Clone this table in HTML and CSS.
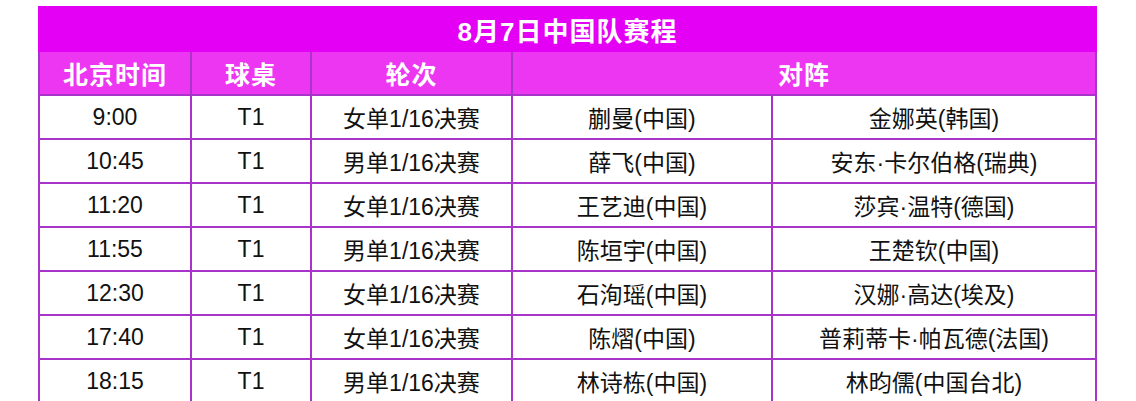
FILE: index.html
```html
<!DOCTYPE html>
<html lang="zh">
<head>
<meta charset="utf-8">
<link rel="stylesheet" href="styles.css">
</head>
<body>
<table class="sched">
  <colgroup>
    <col class="c1"><col class="c2"><col class="c3"><col class="c4"><col class="c5">
  </colgroup>
  <tr class="title"><td colspan="5">8月7日中国队赛程</td></tr>
  <tr class="head">
    <td>北京时间</td><td>球桌</td><td>轮次</td><td colspan="2">对阵</td>
  </tr>
  <tr><td>9:00</td><td>T1</td><td>女单1/16决赛</td><td>蒯曼(中国)</td><td>金娜英(韩国)</td></tr>
  <tr><td>10:45</td><td>T1</td><td>男单1/16决赛</td><td>薛飞(中国)</td><td>安东·卡尔伯格(瑞典)</td></tr>
  <tr><td>11:20</td><td>T1</td><td>女单1/16决赛</td><td>王艺迪(中国)</td><td>莎宾·温特(德国)</td></tr>
  <tr><td>11:55</td><td>T1</td><td>男单1/16决赛</td><td>陈垣宇(中国)</td><td>王楚钦(中国)</td></tr>
  <tr><td>12:30</td><td>T1</td><td>女单1/16决赛</td><td>石洵瑶(中国)</td><td>汉娜·高达(埃及)</td></tr>
  <tr><td>17:40</td><td>T1</td><td>女单1/16决赛</td><td>陈熠(中国)</td><td>普莉蒂卡·帕瓦德(法国)</td></tr>
  <tr><td>18:15</td><td>T1</td><td>男单1/16决赛</td><td>林诗栋(中国)</td><td>林昀儒(中国台北)</td></tr>
</table>
</body>
</html>
```
FILE: styles.css
```css
html, body {
  margin: 0;
  padding: 0;
  background: #ffffff;
}
body {
  padding: 6px 0 0 38px;
  font-family: "Liberation Sans", "Noto Sans CJK SC", sans-serif;
}
.sched {
  border-collapse: collapse;
  table-layout: fixed;
  width: 1057px;
}
.c1 { width: 152px; }
.c2 { width: 120px; }
.c3 { width: 201px; }
.c4 { width: 260px; }
.c5 { width: 324px; }
.sched td {
  border: 2px solid #a934c9;
  height: 42px;
  padding: 0;
  text-align: center;
  vertical-align: middle;
  font-size: 23px;
  color: #111111;
  white-space: nowrap;
}
.title td {
  background: #e400f4;
  border-color: #e400f4;
  color: #ffffff;
  font-weight: bold;
  font-size: 26px;
  letter-spacing: 1px;
  height: 42px;
}
.head td {
  background: #ed36f2;
  border-color: #a934c9;
  border-top-color: #e400f4;
  color: #ffffff;
  font-weight: bold;
  font-size: 25px;
  letter-spacing: 1px;
}
```
